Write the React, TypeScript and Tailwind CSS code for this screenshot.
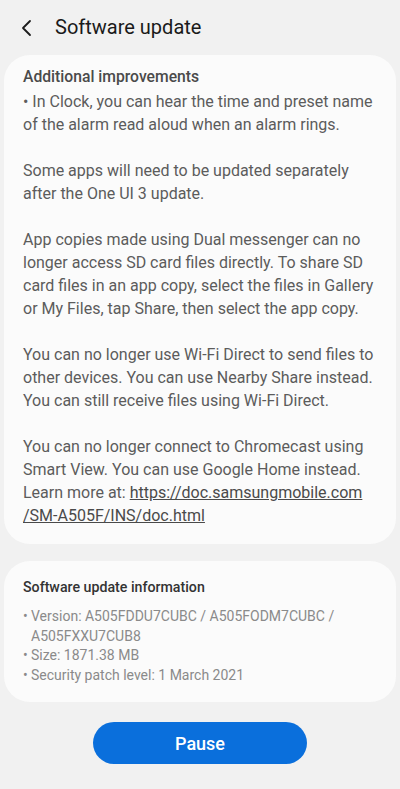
export default function App() {
  const paragraphs = [
    "• In Clock, you can hear the time and preset name of the alarm read aloud when an alarm rings.",
    "Some apps will need to be updated separately after the One UI 3 update.",
    "App copies made using Dual messenger can no longer access SD card files directly. To share SD card files in an app copy, select the files in Gallery or My Files, tap Share, then select the app copy.",
    "You can no longer use Wi-Fi Direct to send files to other devices. You can use Nearby Share instead. You can still receive files using Wi-Fi Direct.",
  ];

  const info = [
    "Version: A505FDDU7CUBC / A505FODM7CUBC / A505FXXU7CUB8",
    "Size: 1871.38 MB",
    "Security patch level: 1 March 2021",
  ];

  return (
    <div
      className="w-[400px] h-[789px] bg-[#f1f1f1] flex flex-col overflow-hidden"
      style={{ fontFamily: "Roboto, 'Noto Sans', sans-serif" }}
    >
      <div className="h-[55px] shrink-0 flex items-center pl-[20px] pt-[1px]">
        <svg width="14" height="18" viewBox="0 0 14 18" fill="none">
          <path d="M10 2 L3 9 L10 16" stroke="#1c1c1c" strokeWidth="1.8" strokeLinecap="round" strokeLinejoin="round" />
        </svg>
        <h1 className="ml-[21px] text-[20px] text-[#1a1a1a] leading-none pb-[2px]">Software update</h1>
      </div>

      <div className="mx-[4px] shrink-0 bg-[#fbfbfb] rounded-[26px] pl-[19px] pr-[14px] pt-[12px] pb-[17px]">
        <h2 className="text-[15.7px] font-medium text-[#4a4a4a] leading-[20px]">Additional improvements</h2>
        <div className="text-[16px] text-[#5c5c5c] leading-[23px] mt-[3px] flex flex-col gap-[23px]">
          {paragraphs.map((p, i) => (
            <p key={i}>{p}</p>
          ))}
          <p>
            You can no longer connect to Chromecast using Smart View. You can use Google Home instead. Learn more at:{" "}
            <span className="underline text-[#4a4a4a]">https://doc.samsungmobile.com</span>
            <br />
            <span className="underline text-[#4a4a4a]">/SM-A505F/INS/doc.html</span>
          </p>
        </div>
      </div>

      <div className="mx-[4px] shrink-0 mt-[17px] bg-[#fbfbfb] rounded-[26px] pl-[19px] pr-[14px] pt-[16px] pb-[17px]">
        <h2 className="text-[14.2px] font-medium text-[#333] leading-[20px]">Software update information</h2>
        <div className="mt-[10px] text-[14px] text-[#8a8a8a] leading-[19.5px]">
          {info.map((t, i) => (
            <div key={i} className="flex">
              <span className="w-[8px] shrink-0">•</span>
              <span>{t}</span>
            </div>
          ))}
        </div>
      </div>

      <div className="flex shrink-0 justify-center mt-[20px]">
        <button className="w-[214px] h-[42px] rounded-full bg-[#0a6fdc] text-white text-[18px] font-medium">Pause</button>
      </div>
    </div>
  );
}
